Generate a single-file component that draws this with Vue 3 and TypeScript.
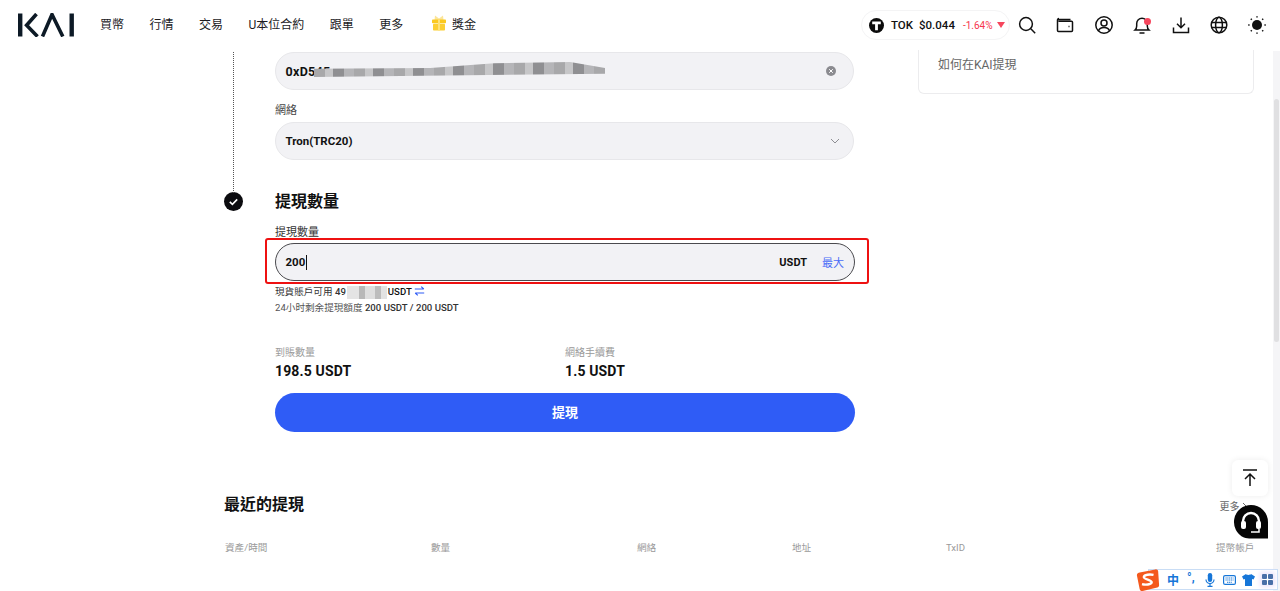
<script setup lang="ts">
const navItems = ['買幣', '行情', '交易', 'U本位合約', '跟單', '更多']
const columns = [
  { label: '資產/時間', width: 206 },
  { label: '數量', width: 206 },
  { label: '網絡', width: 155 },
  { label: '地址', width: 154 },
  { label: 'TxID', width: 270 },
]
</script>

<template>
  <div class="page">
    <header class="topbar">
      <svg class="logo" width="58" height="24" viewBox="0 0 58 24" fill="none">
        <path d="M0 .5h4.400v23H0z" fill="#0d1a26" />
        <path d="M18.500 1 8.600 12.200 19.500 23.500" stroke="#0d1a26" stroke-width="3.600" />
        <path d="M24.500 23.500 34 1.500l10.800 22" stroke="#0d1a26" stroke-width="3.600" />
        <path d="M51.500.5h4.400v23h-4.400z" fill="#0d1a26" />
      </svg>
      <nav class="nav">
        <a v-for="item in navItems" :key="item" class="nav-item">{{ item }}</a>
        <a class="nav-item nav-gift">
          <svg class="gift" width="14" height="16" viewBox="0 0 14 16">
            <path d="M3 .5 7 3.500 11 .5l.5 4.500h-9z" fill="#fbe59a" />
            <rect x="0" y="4.500" width="14" height="3.800" rx=".8" fill="#fbc91f" />
            <rect x="1" y="8.800" width="12" height="6.700" rx=".8" fill="#fccf33" />
            <rect x="6" y="4.500" width="2" height="11" fill="#fde27a" />
          </svg>
          獎金
        </a>
      </nav>
      <div class="ticker">
        <span class="ticker-logo">
          <svg width="15" height="15" viewBox="0 0 15 15">
            <circle cx="7.500" cy="7.500" r="7.500" fill="#0b0b0b" />
            <path d="M3.200 3.600h8.600v2.600H8.900v6H6.100v-6H3.200z" fill="#fff" />
          </svg>
        </span>
        <span class="ticker-name">TOK</span>
        <span class="ticker-price">$0.044</span>
        <span class="ticker-change">-1.64%</span>
        <span class="ticker-arrow"></span>
      </div>
      <div class="tools">
        <svg viewBox="0 0 20 20" class="tool"><circle cx="9" cy="9" r="6.400" /><path d="m13.800 13.800 4.400 4.400" /></svg>
        <svg viewBox="0 0 20 20" class="tool"><path d="M3 4.500h12.500M2.500 5.200c0-1 .6-1.700 1.500-1.700M2.500 5v10.500c0 .6.4 1 1 1h13c.6 0 1-.4 1-1V7.300c0-.6-.4-1-1-1H3.500" /><path d="M13.500 11.500h1" /></svg>
        <svg viewBox="0 0 20 20" class="tool"><circle cx="10" cy="10" r="8.200" /><circle cx="10" cy="8" r="3" /><path d="M4.400 16c.8-2.600 3-3.600 5.600-3.600s4.800 1 5.600 3.600" /></svg>
        <span class="bell">
          <svg viewBox="0 0 20 20" class="tool"><path d="M3 15h14c-1.300-1.200-1.700-2.400-1.700-4V8.500a5.300 5.300 0 0 0-10.600 0V11c0 1.600-.4 2.800-1.700 4zM7.500 18h5" /></svg>
          <i class="bell-dot"></i>
        </span>
        <svg viewBox="0 0 20 20" class="tool"><path d="M10 2.500v10M6 8.800l4 4 4-4M2.500 12.500v5h15v-5" /></svg>
        <svg viewBox="0 0 20 20" class="tool"><circle cx="10" cy="10" r="7.800" /><ellipse cx="10" cy="10" rx="3.400" ry="7.800" /><path d="M2.200 7.500h15.600M2.200 12.500h15.600" /></svg>
        <svg viewBox="0 0 20 20" class="tool">
          <circle cx="10" cy="10" r="5" fill="#111" stroke="none" />
          <path d="M10 1.200v1.400M10 17.400v1.400M1.200 10h1.400M17.400 10h1.400M3.800 3.800l1 1M15.200 15.200l1 1M3.800 16.200l1-1M15.200 4.800l1-1" />
        </svg>
      </div>
    </header>

    <main class="content">
      <div class="columns">
        <section class="form">
          <div class="step step-address">
            <div class="rail rail-line"></div>
            <div class="step-body">
              <div class="field field-address">
                <span class="field-value">0xD545</span>
                <span class="mosaic mosaic-address"></span>
                <span class="clear">
                  <svg width="10" height="10" viewBox="0 0 10 10">
                    <circle cx="5" cy="5" r="5" fill="#8b8b90" />
                    <path d="m3.200 3.200 3.600 3.600M6.800 3.200 3.200 6.800" stroke="#fff" stroke-width="1" />
                  </svg>
                </span>
              </div>
              <label class="field-label label-network">網絡</label>
              <div class="field">
                <span class="field-value field-small">Tron(TRC20)</span>
                <svg class="chevron" width="10" height="6" viewBox="0 0 10 6" fill="none">
                  <path d="m1 1 4 4 4-4" stroke="#8e8e93" stroke-width="1" />
                </svg>
              </div>
            </div>
          </div>

          <div class="step step-amount">
            <div class="rail">
              <svg width="19" height="19" viewBox="0 0 19 19">
                <circle cx="9.500" cy="9.500" r="9.500" fill="#0b0b0f" />
                <path d="m5.800 9.800 2.600 2.500 4.800-4.900" fill="none" stroke="#fff" stroke-width="1.600" />
              </svg>
            </div>
            <div class="step-body">
              <h2 class="title">提現數量</h2>
              <label class="field-label label-amount">提現數量</label>
              <div class="highlight">
                <div class="field field-active">
                  <span class="field-value field-small">200</span>
                  <span class="caret"></span>
                  <span class="unit">USDT</span>
                  <a class="max">最大</a>
                </div>
              </div>
              <p class="hint hint-balance">
                現貨賬戶可用 <b>49</b><span class="mosaic mosaic-balance"></span><b class="balance-end">.00 USDT</b>
                <svg class="swap" width="11" height="10" viewBox="0 0 11 10" fill="none">
                  <path d="M.8 3h9M7.200.6 9.800 3M10.200 7h-9M3.800 9.400 1.200 7" stroke="#2f5cf6" stroke-width="1.100" />
                </svg>
              </p>
              <p class="hint hint-quota">24小时剩余提現額度 <b>200 USDT / 200 USDT</b></p>
              <div class="summary">
                <div class="summary-item">
                  <span class="summary-label">到賬數量</span>
                  <strong class="summary-value">198.5 USDT</strong>
                </div>
                <div class="summary-item">
                  <span class="summary-label">網絡手續費</span>
                  <strong class="summary-value">1.5 USDT</strong>
                </div>
              </div>
              <button class="submit" type="button">提現</button>
            </div>
          </div>
        </section>

        <aside class="side">
          <div class="side-card">如何在KAI提現</div>
        </aside>
      </div>

      <section class="recent">
        <div class="recent-head">
          <h2 class="title">最近的提現</h2>
          <a class="more">
            更多
            <svg width="5" height="8" viewBox="0 0 5 8" fill="none"><path d="m1 1 3 3-3 3" stroke="#666" /></svg>
          </a>
        </div>
        <div class="table-head">
          <span v-for="col in columns" :key="col.label" :style="{ width: col.width + 'px' }">{{ col.label }}</span>
          <span class="last-col">提幣帳戶</span>
        </div>
      </section>
    </main>

    <div class="scrollbar"><div class="scroll-thumb"></div></div>

    <button class="float-top" type="button">
      <svg width="16" height="18" viewBox="0 0 16 18" fill="none">
        <path d="M1 1h14M8 17V5M3 10l5-5 5 5" stroke="#111" stroke-width="1.500" />
      </svg>
    </button>
    <div class="float-support">
      <svg width="36" height="36" viewBox="0 0 36 36">
        <path d="M18 1a17 17 0 0 0-7 32.500c2 .9 4.500 1 7 1h17V18A17 17 0 0 0 18 1z" fill="#060606" />
        <path d="M10 20v-3a8 8 0 0 1 16 0v3" fill="none" stroke="#fff" stroke-width="2.400" />
        <rect x="8" y="17" width="5" height="8" rx="2" fill="#fff" />
        <rect x="23" y="17" width="5" height="8" rx="2" fill="#fff" />
        <path d="M26 25v3h-8" fill="none" stroke="#fff" stroke-width="1.500" />
      </svg>
    </div>

    <div class="ime">
      <svg class="ime-logo" width="24" height="24" viewBox="0 0 26 26">
        <path d="M4 5 21 1.500c1.500-.3 2.600.5 3 2l1 15c.1 1.400-.7 2.300-2 2.700L7 25c-1.500.3-2.600-.4-3-1.900L1 8c-.3-1.500 1.500-2.700 3-3z" fill="#f4591d" />
        <path d="M19 7.500c-4-.8-10-.4-10.500 2.200S17.500 12.800 17 15.500 10 18.500 6.500 17.500" fill="none" stroke="#fff" stroke-width="2.600" />
      </svg>
      <span class="ime-text">中</span>
      <span class="ime-punct">°,</span>
      <svg class="ime-mic" width="10" height="14" viewBox="0 0 10 14">
        <rect x="2.800" y="0" width="4.400" height="9" rx="2.200" fill="#1676d8" />
        <path d="M1 6.500a4 4 0 0 0 8 0M5 10.500V13M2.500 13.300h5" fill="none" stroke="#1676d8" stroke-width="1.200" />
      </svg>
      <svg class="ime-keys" width="13" height="10" viewBox="0 0 13 10">
        <rect x=".6" y=".6" width="11.800" height="8.800" rx="1.500" fill="none" stroke="#1676d8" stroke-width="1.200" />
        <path d="M2.500 3h8M2.500 5h8M4 7.200h5" stroke="#1676d8" stroke-width="1.100" stroke-dasharray="1.200 .6" />
      </svg>
      <svg class="ime-shirt" width="13" height="12" viewBox="0 0 13 12">
        <path d="M4 0 0 2.500l1.500 3L3 5v7h7V5l1.500.5 1.500-3L9 0c-.5 1.200-4.500 1.200-5 0z" fill="#1676d8" />
      </svg>
      <span class="ime-grid"><i></i><i></i><i></i><i></i></span>
    </div>
  </div>
</template>

<style>
html,
body {
  margin: 0;
  height: 100%;
  overflow: hidden;
  background: #fff;
}
</style>

<style scoped>
.page {
  position: relative;
  width: 1280px;
  height: 591px;
  overflow: hidden;
  font-family: Roboto, "Noto Sans CJK TC", sans-serif;
  color: #111;
}

.topbar {
  height: 50px;
  display: flex;
  align-items: center;
  padding-left: 18px;
  box-sizing: border-box;
  background: #fff;
}
.logo {
  flex: none;
}
.nav {
  display: flex;
  align-items: center;
  gap: 25.500px;
  margin-left: 24px;
}
.nav-item {
  font-size: 12px;
  color: #1c1c1f;
  line-height: 16px;
}
.nav-gift {
  display: flex;
  align-items: center;
  gap: 6px;
  margin-left: 3px;
}
.gift {
  margin-top: -4px;
}
.ticker {
  position: absolute;
  left: 861px;
  top: 10px;
  width: 149px;
  height: 30px;
  box-sizing: border-box;
  border: 1px solid #f4f4f5;
  border-radius: 15px;
  display: flex;
  align-items: center;
  padding-left: 7px;
  font-size: 11.500px;
  font-weight: 500;
}
.ticker-logo {
  display: flex;
}
.ticker-name {
  margin-left: 7px;
}
.ticker-price {
  margin-left: 6px;
}
.ticker-change {
  margin-left: 8px;
  font-size: 10px;
  font-weight: 400;
  color: #f6364c;
}
.ticker-arrow {
  margin-left: 4px;
  border-left: 4px solid transparent;
  border-right: 4px solid transparent;
  border-top: 6px solid #f6465d;
}
.tools {
  position: absolute;
  left: 1017px;
  top: 15px;
  display: flex;
  gap: 18.400px;
}
.tool {
  display: block;
  width: 20px;
  height: 20px;
  fill: none;
  stroke: #111;
  stroke-width: 1.500;
}
.bell {
  position: relative;
}
.bell-dot {
  position: absolute;
  top: 3px;
  right: 1px;
  width: 7px;
  height: 7px;
  border-radius: 50%;
  background: #f6465d;
}

.content {
  height: 541px;
  margin-right: 8px;
  overflow: hidden;
}
.columns {
  display: flex;
  padding-left: 224px;
  height: 382px;
}
.form {
  width: 630px;
}
.step {
  display: flex;
}
.rail {
  width: 19px;
  flex: none;
  margin-right: 32px;
}
.rail-line {
  position: relative;
}
.rail-line::before {
  content: "";
  position: absolute;
  left: 9px;
  top: 2px;
  bottom: -1px;
  border-left: 1.500px dotted #555;
}
.step-address {
  height: 142px;
}
.step-body {
  flex: 1;
  padding-top: 2px;
}
.field {
  position: relative;
  height: 38px;
  box-sizing: border-box;
  border: 1px solid #e7e7ea;
  border-radius: 19px;
  background: #f2f2f5;
  display: flex;
  align-items: center;
  padding: 0 10px 0 9.500px;
}
.field-value {
  font-size: 12.500px;
  font-weight: 700;
  letter-spacing: 0.3px;
}
.field-small {
  font-size: 11.500px;
  letter-spacing: 0;
}
.mosaic {
  position: absolute;
  display: block;
  filter: blur(0.6px);
}
.mosaic-address {
  left: 38px;
  top: 9px;
  width: 291px;
  height: 15px;
  background: repeating-linear-gradient(90deg, #a8a8aa 0 11px, #c6c6c8 11px 19px, #8f8f92 19px 30px, #b5b5b8 30px 40px);
  clip-path: polygon(0 45%, 40% 40%, 62% 8%, 88% 0, 100% 40%, 100% 78%, 0 100%);
}
.clear {
  margin-left: auto;
  margin-right: 7px;
  display: flex;
}
.field-label {
  display: block;
  font-size: 11px;
  line-height: 16px;
  color: #444;
}
.label-network {
  margin: 13px 0 3px;
}
.chevron {
  margin-left: auto;
  margin-right: 3px;
}
.step-amount .step-body {
  padding-top: 0;
}
.title {
  margin: 0;
  font-size: 16px;
  font-weight: 700;
  line-height: 20px;
}
.label-amount {
  margin: 13px 0 2px;
  color: #333;
}
.highlight {
  position: relative;
}
.highlight::after {
  content: "";
  position: absolute;
  left: -10px;
  right: -14px;
  top: -5px;
  bottom: -3px;
  border: 2px solid #ee1111;
  border-radius: 3px;
  pointer-events: none;
}
.field-active {
  border-color: #4a4a4e;
}
.caret {
  width: 1px;
  height: 15px;
  background: #111;
  margin-left: 1px;
}
.unit {
  margin-left: auto;
  font-size: 11px;
  font-weight: 700;
}
.max {
  margin-left: 15px;
  font-size: 11px;
  color: #4a6cf7;
}
.hint {
  position: relative;
  margin: 0;
  font-size: 9.600px;
  line-height: 14px;
  color: #555;
}
.hint b {
  font-weight: 500;
  color: #333;
}
.hint-balance {
  margin-top: 4px;
  color: #333;
}
.balance-end {
  margin-left: 26px;
  color: #111 !important;
}
.mosaic-balance {
  left: 72px;
  top: 1px;
  width: 40px;
  height: 13px;
  background: linear-gradient(90deg, #e4e4e4 0 30%, #b8b8b8 30% 45%, #dedede 45% 70%, #bcbcbc 70% 85%, #e2e2e2 85%);
}
.swap {
  vertical-align: -1px;
  margin-left: 2px;
}
.hint-quota {
  margin-top: 2px;
}
.summary {
  display: flex;
  margin-top: 31px;
}
.summary-item {
  width: 290px;
  display: flex;
  flex-direction: column;
}
.summary-label {
  font-size: 10px;
  line-height: 14px;
  color: #9a9a9a;
}
.summary-value {
  margin-top: 1px;
  font-size: 14px;
  line-height: 20px;
  font-weight: 700;
  letter-spacing: 0.15px;
}
.submit {
  display: block;
  width: 100%;
  height: 39px;
  margin-top: 12px;
  padding: 0 0 2px;
  border: none;
  border-radius: 20px;
  background: #2f5cf6;
  color: #fff;
  font-family: inherit;
  font-size: 13px;
  font-weight: 700;
}
.side {
  margin-left: 64px;
  width: 336px;
}
.side-card {
  height: 44px;
  box-sizing: border-box;
  border: 1px solid #ececee;
  border-top: none;
  border-radius: 0 0 6px 6px;
  padding: 6px 0 0 19px;
  font-size: 12px;
  line-height: 18px;
  color: #666;
}
.recent {
  padding-left: 224px;
  padding-right: 18px;
  margin-top: 63px;
}
.recent-head {
  display: flex;
  align-items: center;
  justify-content: space-between;
}
.more {
  font-size: 10px;
  color: #666;
  margin-right: 7px;
}
.table-head {
  display: flex;
  margin-top: 26px;
  padding-left: 1px;
  font-size: 9.600px;
  line-height: 14px;
  color: #9a9a9a;
}
.table-head span {
  flex: none;
  white-space: nowrap;
}
.table-head .last-col {
  margin-left: auto;
}

.scrollbar {
  position: absolute;
  right: 0;
  top: 51px;
  bottom: 0;
  width: 7px;
  background: #f5f5f7;
}
.scroll-thumb {
  margin: 48px 1px 0;
  height: 243px;
  border-radius: 3px;
  background: #e0e0e2;
}
.float-top {
  position: absolute;
  left: 1232px;
  top: 460px;
  width: 36px;
  height: 36px;
  padding: 0;
  border: none;
  border-radius: 6px;
  background: #fff;
  box-shadow: 0 0 6px rgba(0, 0, 0, 0.08);
  display: flex;
  align-items: center;
  justify-content: center;
}
.float-support {
  position: absolute;
  left: 1233px;
  top: 504px;
  width: 36px;
  height: 36px;
}
.ime {
  position: absolute;
  left: 1148px;
  top: 569px;
  width: 130px;
  height: 21px;
  box-sizing: border-box;
  border: 1px solid #c9ddf5;
  background: #fff;
  display: flex;
  align-items: center;
  padding-left: 18px;
  color: #1676d8;
}
.ime-logo {
  position: absolute;
  left: -13px;
  top: -2px;
}
.ime-text {
  font-size: 12px;
  font-weight: 700;
}
.ime-punct {
  margin-left: 8px;
  font-size: 12px;
  font-weight: 700;
  margin-top: -3px;
}
.ime-mic {
  margin-left: 10px;
}
.ime-keys {
  margin-left: 8px;
}
.ime-shirt {
  margin-left: 6px;
}
.ime-grid {
  margin-left: 7px;
  display: grid;
  grid-template-columns: 5px 5px;
  gap: 1px;
  box-shadow: 0 0 5px 2px #ece2fb;
}
.ime-grid i {
  display: block;
  width: 5px;
  height: 5px;
  border-radius: 1px;
  background: #4a6fa8;
}
</style>
